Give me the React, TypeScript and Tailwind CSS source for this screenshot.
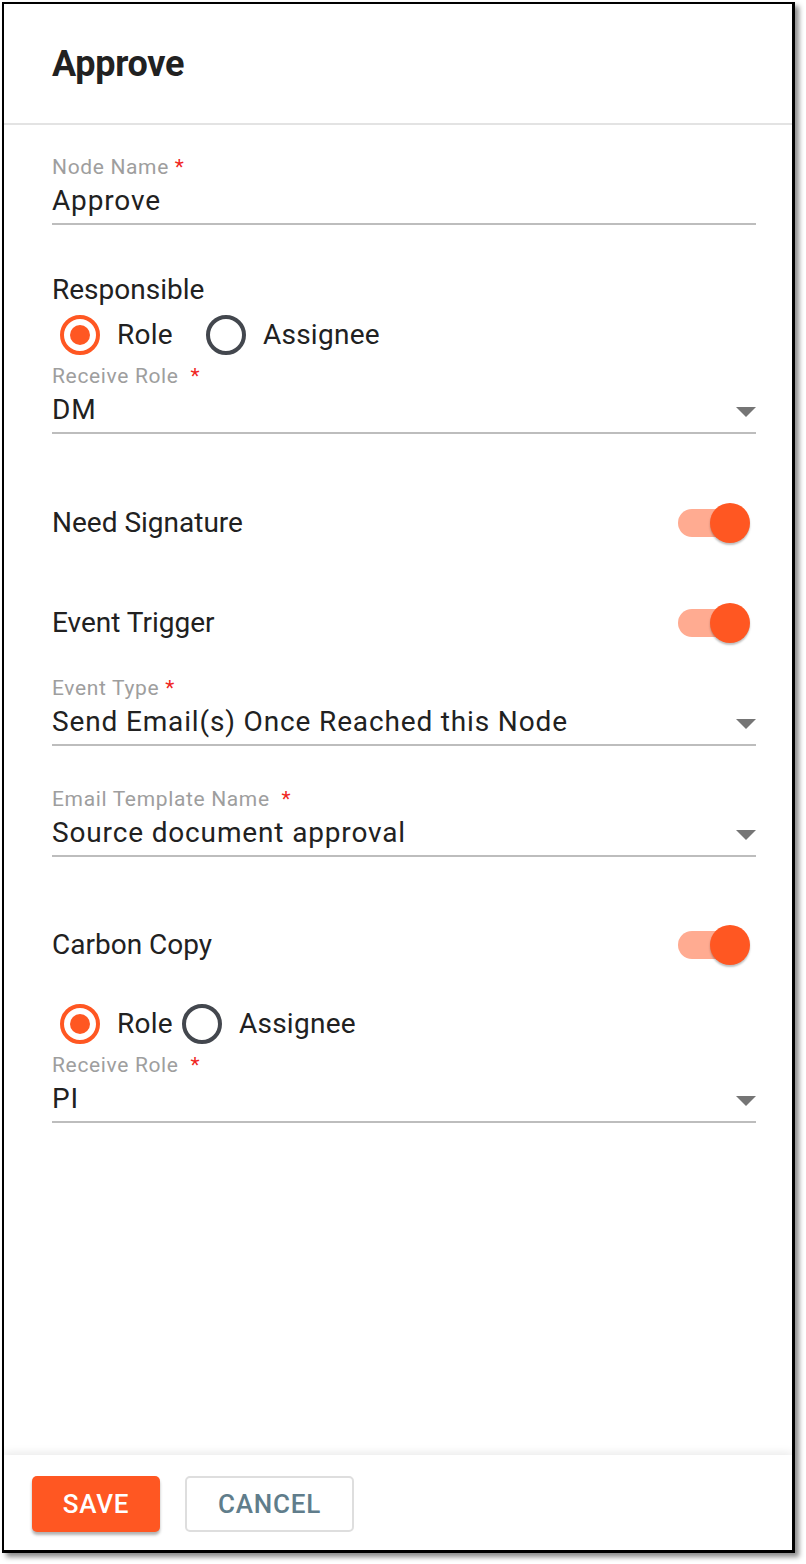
import React from "react";

function Label({ text, gap }: { text: string; gap?: boolean }) {
  return (
    <div className="h-[24px] text-[21px] leading-[24px] text-[#9e9e9e] tracking-[0.65px] whitespace-pre">
      {text}
      {gap ? "  " : " "}
      <span className="text-[#f0261f]">*</span>
    </div>
  );
}

function Field({
  label,
  value,
  select,
  gap,
  className,
}: {
  label: string;
  value: string;
  select?: boolean;
  gap?: boolean;
  className?: string;
}) {
  return (
    <div className={"flex flex-col " + (className ?? "")}>
      <Label text={label} gap={gap} />
      <div className="mt-[4px] flex items-start justify-between border-b-2 border-[#bdbdbd] pb-[4px]">
        <span className="h-[36px] text-[28px] leading-[36px] tracking-[0.85px] text-[#212121]">{value}</span>
        {select && (
          <svg width="20" height="10" viewBox="0 0 20 10" className="mt-[15px]">
            <path d="M0 0 L20 0 L10 10 Z" fill="#757575" />
          </svg>
        )}
      </div>
    </div>
  );
}

function Radio({ checked }: { checked: boolean }) {
  return checked ? (
    <div className="flex h-[40px] w-[40px] items-center justify-center rounded-full border-4 border-[#ff5722]">
      <div className="h-[20px] w-[20px] rounded-full bg-[#ff5722]" />
    </div>
  ) : (
    <div className="h-[40px] w-[40px] rounded-full border-4 border-[#43474e]" />
  );
}

function RadioRow({ className, gapAfterRole }: { className?: string; gapAfterRole: string }) {
  return (
    <div className={"flex h-[44px] items-center " + (className ?? "")}>
      <div className="ml-[8px]">
        <Radio checked />
      </div>
      <span className="ml-[17px] text-[28px] leading-[36px] tracking-[0.26px] text-[#212121]">Role</span>
      <div className={gapAfterRole}>
        <Radio checked={false} />
      </div>
      <span className="ml-[17px] text-[28px] leading-[36px] tracking-[0.26px] text-[#212121]">Assignee</span>
    </div>
  );
}

function Switch() {
  return (
    <div className="relative mr-[6px] h-[40px] w-[72px]">
      <div className="absolute left-0 top-[6px] h-[28px] w-[62px] rounded-full bg-[#ffab91]" />
      <div className="absolute right-0 top-0 h-[40px] w-[40px] rounded-full bg-[#ff5722] shadow-[0_2px_2px_rgba(0,0,0,0.25)]" />
    </div>
  );
}

function ToggleRow({ text, className }: { text: string; className?: string }) {
  return (
    <div className={"flex h-[44px] items-center justify-between " + (className ?? "")}>
      <span className="text-[28px] leading-[36px] text-[#212121]">{text}</span>
      <Switch />
    </div>
  );
}

export default function App() {
  return (
    <div className="h-[1564px] w-[806px] bg-white pl-[2px] pt-[2px]" style={{ fontFamily: "Roboto, 'Noto Sans', sans-serif" }}>
      <div className="flex h-[1551px] w-[793px] flex-col overflow-hidden border-l-2 border-t-2 border-r-[3px] border-b-[3px] border-black bg-white shadow-[4px_4px_5px_rgba(0,0,0,0.45)]">
        <div className="flex h-[121px] shrink-0 items-center border-b-2 border-[#e3e3e3] pl-[48px]">
          <span className="text-[36px] font-bold leading-[44px] tracking-[-0.3px] text-[#212121]">Approve</span>
        </div>
        <div className="flex flex-1 flex-col pl-[48px] pr-[36px]">
          <Field className="mt-[30px]" label="Node Name" value="Approve" />
          <div className="mt-[47px] text-[28px] leading-[36px] text-[#212121]">Responsible</div>
          <RadioRow className="mt-[5px]" gapAfterRole="ml-[33px]" />
          <Field className="mt-[7px]" label="Receive Role" value="DM" select gap />
          <ToggleRow className="mt-[67px]" text="Need Signature" />
          <ToggleRow className="mt-[56px]" text="Event Trigger" />
          <Field className="mt-[31px]" label="Event Type" value="Send Email(s) Once Reached this Node" select />
          <Field className="mt-[41px]" label="Email Template Name" value="Source document approval" select gap />
          <ToggleRow className="mt-[66px]" text="Carbon Copy" />
          <RadioRow className="mt-[35px]" gapAfterRole="ml-[9px]" />
          <Field className="mt-[7px]" label="Receive Role" value="PI" select gap />
        </div>
        <div className="relative flex h-[95px] shrink-0 items-center gap-[25px] bg-white pl-[28px] pt-[3px] shadow-[0_-3px_8px_rgba(0,0,0,0.08)]">
          <button className="flex h-[56px] w-[128px] items-center justify-center rounded-[5px] bg-[#ff5722] text-[26px] font-medium tracking-[0.75px] text-white shadow-[0_3px_3px_rgba(0,0,0,0.3)]">
            SAVE
          </button>
          <button className="flex h-[56px] w-[169px] items-center justify-center rounded-[5px] border-2 border-[#dedede] bg-white text-[26px] font-medium tracking-[0.75px] text-[#607d8b]">
            CANCEL
          </button>
        </div>
      </div>
    </div>
  );
}
